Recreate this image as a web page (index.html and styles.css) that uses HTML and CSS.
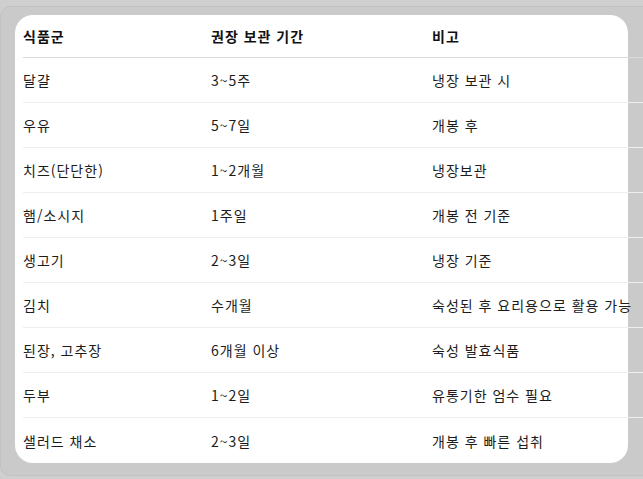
FILE: index.html
```html
<!DOCTYPE html>
<html lang="ko">
<head>
<meta charset="utf-8">
<link rel="stylesheet" href="styles.css">
</head>
<body>
<div class="frame">
  <div class="card">
    <table class="storage">
      <colgroup>
        <col class="c-food">
        <col class="c-period">
        <col class="c-note">
      </colgroup>
      <thead>
        <tr><th>식품군</th><th>권장 보관 기간</th><th>비고</th></tr>
      </thead>
      <tbody>
        <tr><td>달걀</td><td>3~5주</td><td>냉장 보관 시</td></tr>
        <tr><td>우유</td><td>5~7일</td><td>개봉 후</td></tr>
        <tr><td>치즈(단단한)</td><td>1~2개월</td><td>냉장보관</td></tr>
        <tr><td>햄/소시지</td><td>1주일</td><td>개봉 전 기준</td></tr>
        <tr><td>생고기</td><td>2~3일</td><td>냉장 기준</td></tr>
        <tr><td>김치</td><td>수개월</td><td>숙성된 후 요리용으로 활용 가능</td></tr>
        <tr><td>된장, 고추장</td><td>6개월 이상</td><td>숙성 발효식품</td></tr>
        <tr><td>두부</td><td>1~2일</td><td>유통기한 엄수 필요</td></tr>
        <tr class="last"><td>샐러드 채소</td><td>2~3일</td><td>개봉 후 빠른 섭취</td></tr>
      </tbody>
    </table>
  </div>
</div>
</body>
</html>
```

FILE: styles.css
```css
html, body {
  margin: 0;
  padding: 0;
  overflow: hidden;
  background: #cfcfcf;
}

body {
  width: 643px;
  height: 479px;
  font-family: "Noto Sans CJK KR", "Noto Sans", sans-serif;
  color: #1c1c1c;
}

.frame {
  margin-top: 6px;
  width: 720px;
  height: 470px;
  box-sizing: border-box;
  padding: 8px 0 0 14px;
  background: #cacaca;
  border: 1px solid #c2c2c2;
  border-radius: 10px;
}

.card {
  width: 613px;
  box-sizing: border-box;
  padding-left: 8px;
  background: #ffffff;
  border-radius: 18px;
}

.storage {
  width: 680px;
  border-collapse: collapse;
  table-layout: fixed;
  font-size: 14px;
  letter-spacing: 1px;
}

.c-food { width: 188px; }
.c-period { width: 221px; }

.storage th {
  height: 42px;
  padding: 0;
  text-align: left;
  font-weight: 700;
  color: #111;
  border-bottom: 1px solid #d9d9d9;
  vertical-align: middle;
}

.storage td {
  height: 44px;
  padding: 0;
  text-align: left;
  vertical-align: middle;
  border-bottom: 1px solid #eeeeee;
  white-space: nowrap;
}

.storage tr.last td {
  border-bottom: 0;
  height: 45px;
}
```
